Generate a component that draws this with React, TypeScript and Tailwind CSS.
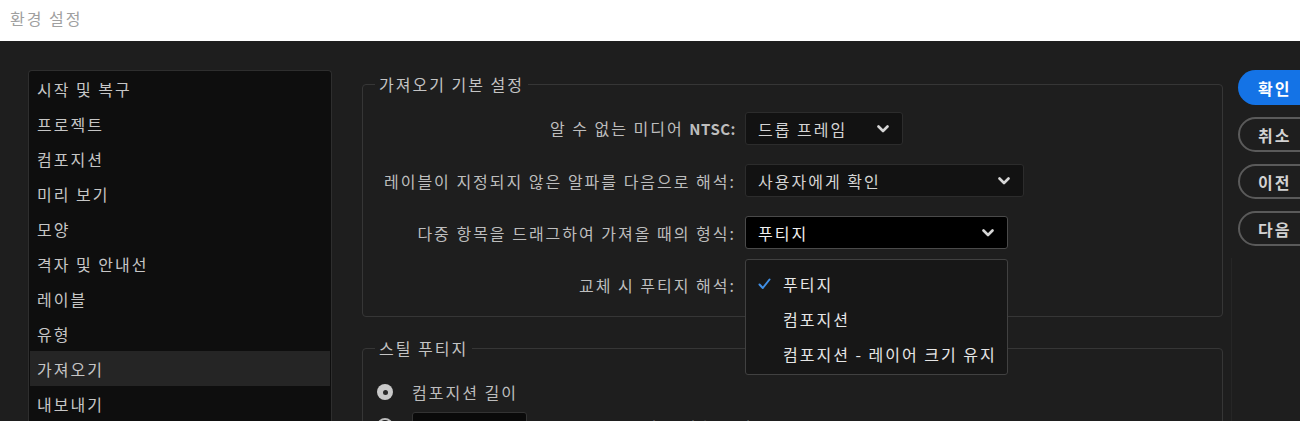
import React from "react";

const Chevron = () => (
  <svg width="12" height="8" viewBox="0 0 12 8" className="shrink-0">
    <polyline points="1.5,1.5 6,6 10.5,1.5" fill="none" stroke="#d6d6d6" strokeWidth="2.6" strokeLinecap="round" strokeLinejoin="round" />
  </svg>
);

const navItems = [
  "시작 및 복구",
  "프로젝트",
  "컴포지션",
  "미리 보기",
  "모양",
  "격자 및 안내선",
  "레이블",
  "유형",
  "가져오기",
  "내보내기",
];

function Select({ value, width, focused }: { value: string; width: string; focused?: boolean }) {
  return (
    <div
      className={`${width} h-[33px] rounded-[3px] border flex items-center justify-between pl-[12px] pr-[13px] ${
        focused ? "bg-black border-[#4a4a4a] text-[#f0f0f0]" : "bg-[#121212] border-[#2c2c2c] text-[#d4d4d4]"
      }`}
    >
      <span className="whitespace-nowrap">{value}</span>
      <Chevron />
    </div>
  );
}

export default function App() {
  return (
    <div className="w-[1300px] h-[421px] overflow-hidden bg-white font-['Noto_Sans_CJK_KR','Noto_Sans',sans-serif] text-[16px] tracking-[2px] leading-[22px]">
      <div className="h-[41px] bg-white pl-[10px] pt-[7px] text-[16px] text-[#a0a0a0]">환경 설정</div>
      <div className="h-[380px] bg-[#1e1e1e] flex pl-[28px] pt-[29px]">
        {/* left nav */}
        <div className="w-[304px] shrink-0 self-stretch bg-[#0e0e0e] border border-b-0 border-[#2e2e2e] rounded-t-[4px] px-[1px]">
          {navItems.map((t) => (
            <div
              key={t}
              className={`h-[35px] flex items-center pl-[7px] text-[#c6c6c6] ${t === "가져오기" ? "bg-[#252525]" : ""}`}
            >
              {t}
            </div>
          ))}
        </div>

        {/* content */}
        <div className="ml-[30px] w-[861px] shrink-0 flex flex-col">
          <fieldset className="mt-[3px] border border-[#363636] rounded-[4px] px-0 pt-[17px] pb-[15px]">
            <legend className="ml-[12px] px-[4px] text-[#c4c4c4] leading-[22px]">가져오기 기본 설정</legend>
            <div className="flex flex-col gap-[19px] text-[#bdbdbd]">
              <div className="flex items-center">
                <div className="w-[373px] shrink-0 text-right whitespace-nowrap">
                  알 수 없는 미디어 <span className="text-[15px] font-semibold tracking-[0.5px]">NTSC:</span>
                </div>
                <div className="ml-[9px]">
                  <Select value="드롭 프레임" width="w-[158px]" />
                </div>
              </div>
              <div className="flex items-center">
                <div className="w-[373px] shrink-0 text-right whitespace-nowrap">레이블이 지정되지 않은 알파를 다음으로 해석:</div>
                <div className="ml-[9px]">
                  <Select value="사용자에게 확인" width="w-[279px]" />
                </div>
              </div>
              <div className="flex items-center">
                <div className="w-[373px] shrink-0 text-right whitespace-nowrap">다중 항목을 드래그하여 가져올 때의 형식:</div>
                <div className="ml-[9px]">
                  <Select value="푸티지" width="w-[263px]" focused />
                </div>
              </div>
              <div className="flex items-center">
                <div className="w-[373px] shrink-0 text-right whitespace-nowrap">교체 시 푸티지 해석:</div>
                <div className="ml-[9px] relative w-[263px] h-[33px]">
                  <div className="absolute left-0 top-[-9px] w-[263px] bg-[#171717] border border-[#414141] rounded-[3px] pt-[6px] pb-[3px] z-10 text-[#e6e6e6]">
                    <div className="h-[35px] flex items-center pl-[12px]">
                      <svg width="13" height="12" viewBox="0 0 13 12" className="shrink-0">
                        <polyline points="1.5,6.5 4.8,10 11.5,1.5" fill="none" stroke="#3f8fe6" strokeWidth="2" strokeLinecap="round" strokeLinejoin="round" />
                      </svg>
                      <span className="ml-[12px]">푸티지</span>
                    </div>
                    <div className="h-[35px] flex items-center pl-[37px]">컴포지션</div>
                    <div className="h-[35px] flex items-center pl-[37px] whitespace-nowrap">컴포지션 - 레이어 크기 유지</div>
                  </div>
                </div>
              </div>
            </div>
          </fieldset>

          <fieldset className="mt-[20px] border border-[#363636] rounded-[4px] px-0 pt-[21px] pb-[10px]">
            <legend className="ml-[12px] px-[4px] text-[#c4c4c4] leading-[22px]">스틸 푸티지</legend>
            <div className="flex flex-col gap-[8px] pl-[14px] text-[#bdbdbd]">
              <div className="h-[24px] flex items-center">
                <span className="w-[16px] h-[16px] rounded-full bg-[#c9c9c9] flex items-center justify-center">
                  <span className="w-[5px] h-[5px] rounded-full bg-[#2a2a2a]" />
                </span>
                <span className="ml-[19px]">컴포지션 길이</span>
              </div>
              <div className="h-[30px] flex items-start">
                <span className="mt-[6px] w-[16px] h-[16px] rounded-full border-2 border-[#bdbdbd]" />
                <span className="ml-[19px] w-[115px] h-[30px] rounded-[3px] bg-[#0a0a0a] border border-[#333]" />
                <span className="ml-[14px] mt-[4px] text-[#9a9a9a]">0;00;05;00 기본 지속 시간</span>
              </div>
            </div>
          </fieldset>
        </div>

        {/* buttons */}
        <div className="ml-[15px] flex flex-col gap-[12px] w-[90px] shrink-0 font-bold">
          <button className="h-[35px] rounded-full bg-[#1473e6] text-white text-left pl-[20px]">확인</button>
          <button className="h-[35px] rounded-full border-2 border-[#5a5a5a] text-[#d2d2d2] text-left pl-[18px]">취소</button>
          <button className="h-[35px] rounded-full border-2 border-[#5a5a5a] text-[#d2d2d2] text-left pl-[18px]">이전</button>
          <button className="h-[35px] rounded-full border-2 border-[#5a5a5a] text-[#d2d2d2] text-left pl-[18px]">다음</button>
          <div className="flex-1 -ml-[7px] border-l border-[#262626]" />
        </div>
      </div>
    </div>
  );
}
